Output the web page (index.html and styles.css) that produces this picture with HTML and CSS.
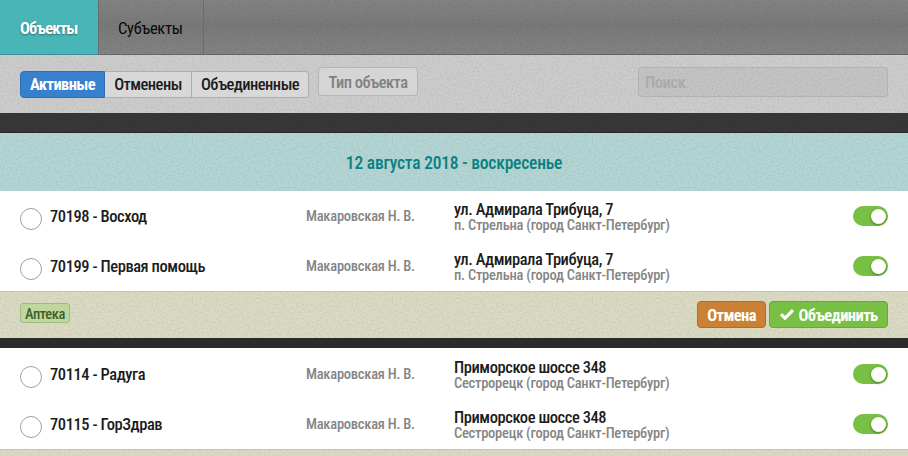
FILE: index.html
```
<!DOCTYPE html>
<html lang="ru">
<head>
<meta charset="utf-8">
<title>Объекты</title>
<link rel="stylesheet" href="styles.css">
</head>
<body>
<nav class="tabs grain">
  <a class="tab tab-active"><span>Объекты</span></a>
  <a class="tab"><span>Субъекты</span></a>
</nav>
<div class="toolbar grain">
  <div class="segments">
    <button class="segment segment-active">Активные</button>
    <button class="segment">Отменены</button>
    <button class="segment">Объединенные</button>
  </div>
  <button class="type">Тип объекта</button>
  <input class="search" placeholder="Поиск">
</div>
<div class="divider grain"></div>
<h2 class="date grain">12 августа 2018 - воскресенье</h2>
<section class="group">
  <div class="row">
    <i class="radio"></i><div class="name">70198 - Восход</div><div class="person">Макаровская Н. В.</div>
    <div class="address"><div>ул. Адмирала Трибуца, 7</div><small>п. Стрельна (город Санкт-Петербург)</small></div><i class="toggle"></i>
  </div>
  <div class="row">
    <i class="radio"></i><div class="name">70199 - Первая помощь</div><div class="person">Макаровская Н. В.</div>
    <div class="address"><div>ул. Адмирала Трибуца, 7</div><small>п. Стрельна (город Санкт-Петербург)</small></div><i class="toggle"></i>
  </div>
</section>
<div class="footer grain">
  <span class="tag">Аптека</span>
  <div class="actions">
    <button class="action cancel">Отмена</button>
    <button class="action merge"><svg class="check" viewBox="0 0 14 12"><path d="M1 6.2 5 10.2 13 2.2" fill="none" stroke="#fff" stroke-width="3.1"/></svg>Объединить</button>
  </div>
</div>
<div class="gap"></div>
<section class="group group-next">
  <div class="row">
    <i class="radio"></i><div class="name">70114 - Радуга</div><div class="person">Макаровская Н. В.</div>
    <div class="address"><div>Приморское шоссе 348</div><small>Сестрорецк (город Санкт-Петербург)</small></div><i class="toggle"></i>
  </div>
  <div class="row">
    <i class="radio"></i><div class="name">70115 - ГорЗдрав</div><div class="person">Макаровская Н. В.</div>
    <div class="address"><div>Приморское шоссе 348</div><small>Сестрорецк (город Санкт-Петербург)</small></div><i class="toggle"></i>
  </div>
</section>
<div class="footer footer-last grain"></div>
</body>
</html>
```
FILE: styles.css
```
* { box-sizing: border-box; }
body {
  margin: 0;
  height: 456px;
  overflow: hidden;
  background: #2b2b2b;
  color: #1c1c1c;
  font: 500 16.5px/20px "Roboto Condensed", Roboto, sans-serif;
  font-stretch: 75%;
  letter-spacing: -.43px;
}
button, input { font: inherit; font-stretch: inherit; letter-spacing: inherit; margin: 0; }
.grain {
  --noise: url("data:image/svg+xml,%3Csvg xmlns='http://www.w3.org/2000/svg' width='200' height='200'%3E%3Cfilter id='n' x='0' y='0' width='100%25' height='100%25'%3E%3CfeTurbulence type='fractalNoise' baseFrequency='.5' numOctaves='2' stitchTiles='stitch'/%3E%3CfeColorMatrix values='0 0 0 0 0 0 0 0 0 0 0 0 0 0 0 .9 0 0 0 -.34'/%3E%3C/filter%3E%3Crect width='200' height='200' filter='url(%23n)' opacity='.17'/%3E%3C/svg%3E");
  background-image: var(--noise);
}
.tabs { display: flex; height: 55px; background-color: #808080; background-image: var(--noise), linear-gradient(#848484, #797979 45%, #848484); border-bottom: 1px solid #666; }
.tab { display: flex; align-items: center; height: 55px; padding: 3px 20px 0; border-right: 1px solid #6c6c6c; color: #080808; font-weight: 450; }
.tab:last-child { width: 106px; padding: 3px 0 0 19px; border-left: 1px solid #6c6c6c; letter-spacing: -.3px; }
.tab-active { width: 98px; height: 55px; padding-right: 0; border: 0; border-bottom: 1px solid #3c9293; background: #4ab5b6; color: #fff; font-weight: 700; letter-spacing: -.85px; text-shadow: 0 1px 2px #0006; }
.toolbar { display: flex; height: 58px; padding: 12px 20px 0; background-color: #cdcdcd; }
.segments { display: flex; height: 27px; margin-top: 4px; }
.segment { width: 87px; padding: 0; border: 1px solid #adadad; border-left: 0; background: #d8d8d8; color: #1c1c1c; line-height: 26px; letter-spacing: -.55px; }
.segment:last-child { width: 117px; border-radius: 0 4px 4px 0; }
.segment-active { width: 85px; border: 1px solid #2c6fb8; border-radius: 4px 0 0 4px; background: #3680ce; color: #fff; font-weight: 700; letter-spacing: -.6px; }
.type { width: 100px; height: 29px; margin-left: 9px; padding: 2px 0 0; border: 1px solid #b5b5b5; border-radius: 4px; background: #d5d5d5; color: #808080; letter-spacing: -.55px; }
.search { width: 250px; height: 30px; margin-left: auto; padding: 1px 6px 0; border: 1px solid #b2b2b2; border-radius: 3px; background: #0000000a; }
.search::placeholder { color: #aaa; opacity: 1; }
.divider { height: 20px; background-color: #373737; border-bottom: 1px solid #282828; }
.date { height: 58px; margin: 0; background-color: #b4d6d4; color: #087f80; text-align: center; font-size: 17.5px; line-height: 60px; font-weight: 500; letter-spacing: -.2px; }
.group { height: 100px; background: #fff; }
.group-next { height: 101px; padding-top: 1px; }
.row { display: grid; grid-template-columns: 30px 256px 148px 1fr 35px; height: 50px; padding: 0 20px; }
.radio { width: 22px; height: 22px; margin-top: 17px; border: 1px solid #a0a0a0; border-radius: 50%; }
.name { padding-top: 16px; }
.person { padding-top: 16px; color: #858585; font-size: 14.5px; letter-spacing: -.25px; }
.address > div { margin-top: 10px; line-height: 18px; }
.address small { display: block; margin-top: -1px; line-height: 15px; color: #858585; font-size: 14.5px; letter-spacing: -.25px; }
.toggle { width: 35px; height: 20px; margin-top: 15px; border-radius: 10px; background: #77c043; }
.toggle::after { content: ""; display: block; width: 15px; height: 15px; margin: 3px 0 0 18px; border-radius: 50%; background: #fff; box-shadow: 0 1px 3px #0006; }
.footer { display: flex; align-items: flex-start; height: 47px; padding: 9px 20px 0; background-color: #dcdbc4; border-top: 1px solid #c4c3b4; }
.footer-last { height: 7px; padding: 0; }
.tag { width: 50px; margin-top: 2px; height: 20px; padding: 1px 4px 0; border: 1px solid #a3b983; border-radius: 3px; background: #bfd79d; color: #405f29; font-size: 14.5px; letter-spacing: -.4px; line-height: 20px; }
.actions { display: flex; gap: 3px; margin-left: auto; }
.action { display: flex; align-items: center; justify-content: center; width: 69px; height: 27px; padding: 3px 0 0; border: 1px solid #b36d2a; border-radius: 4px; background: #cb8033; color: #fff; font-weight: 700; letter-spacing: -.6px; }
.merge { width: 119px; border-color: #66a938; background: #77c043; }
.check { width: 14px; height: 12px; margin: -4px 4px 0 1px; }
.gap { height: 10px; }
```
